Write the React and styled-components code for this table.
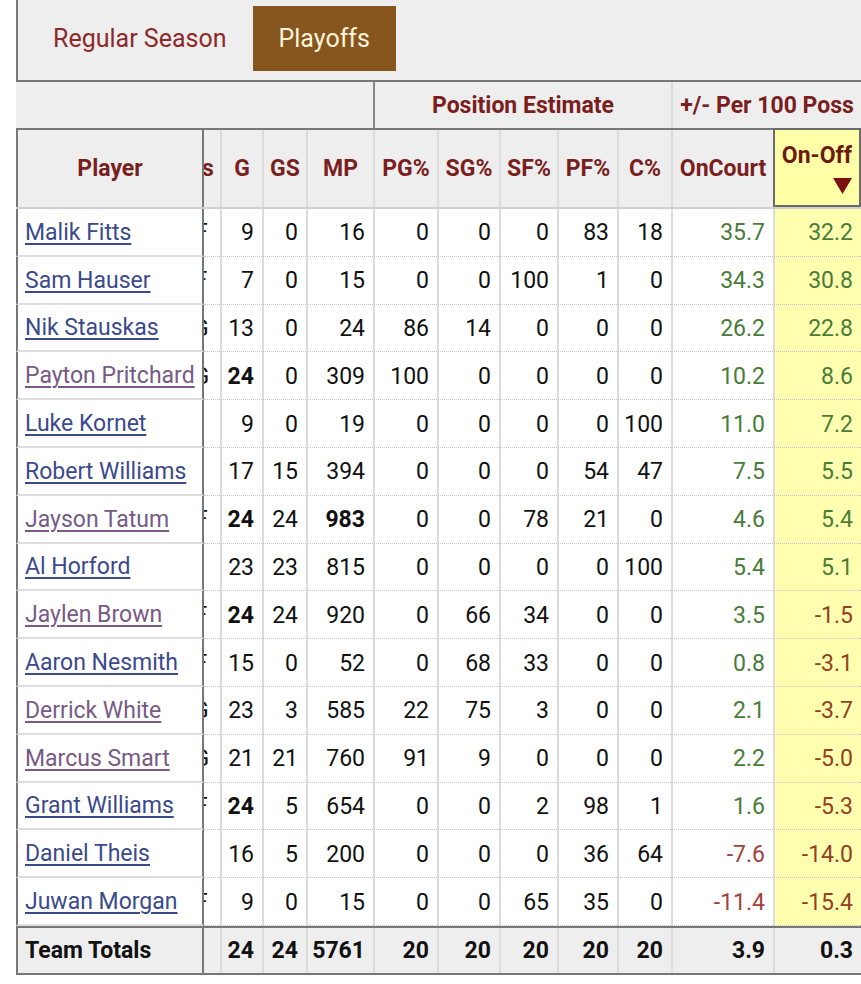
import React from 'react';
import styled, { createGlobalStyle } from 'styled-components';

const GlobalStyle = createGlobalStyle`
  html, body { margin: 0; padding: 0; background: #fff; }
  body { font-family: Roboto, "Noto Sans", "Liberation Sans", sans-serif; }
  * { box-sizing: border-box; }
`;

const COLS = '188px 16px 42px 44px 67px 64px 62px 58px 60px 54px 102px 88px';

const Page = styled.div`
  padding-left: 16px;
  width: 861px;
`;

const TabBar = styled.div`
  display: flex;
  align-items: flex-start;
  height: 82px;
  padding: 6px 0 0 9px;
  background: #eee;
  border-left: 2px solid #777;
  border-bottom: 2px solid #777;
`;

const Tab = styled.div`
  height: 65px;
  padding: 0 26px;
  display: flex;
  align-items: center;
  font-size: 25px;
  color: ${(p) => (p.$active ? '#fff4dc' : '#8c2a2a')};
  background: ${(p) => (p.$active ? '#87561e' : 'transparent')};
`;

const GroupRow = styled.div`
  display: grid;
  grid-template-columns: 357px 298px 190px;
  height: 46px;
  background: #eee;
`;

const GroupCell = styled.div`
  display: flex;
  align-items: center;
  justify-content: center;
  font-size: 23px;
  font-weight: 700;
  color: #7a1e1e;
  border-left: ${(p) => (p.$edge ? `2px solid ${p.$edge}` : 'none')};
`;

const HeadRow = styled.div`
  display: grid;
  grid-template-columns: ${COLS};
  height: 81px;
  background: #eee;
  border-top: 2px solid #777;
  border-bottom: 2px solid #cfcfcf;
`;

const HeadCell = styled.div`
  display: flex;
  align-items: center;
  justify-content: center;
  font-size: 23px;
  font-weight: 700;
  color: #7a1e1e;
  border-left: 2px solid #dcdcdc;
  white-space: nowrap;
`;

const PlayerHead = styled(HeadCell)`
  border-left: 2px solid #777;
  border-right: 2px solid #777;
`;

const PosHead = styled.div`
  overflow: hidden;
  display: flex;
  align-items: center;
  font-size: 23px;
  font-weight: 700;
  color: #7a1e1e;
`;

const SortHead = styled.div`
  display: flex;
  flex-direction: column;
  align-items: flex-end;
  justify-content: center;
  gap: 9px;
  padding-right: 7px;
  margin-top: -2px;
  background: #ffffa8;
  border: 2px solid #6a6a6a;
  font-size: 23px;
  font-weight: 700;
  color: #6e1a10;
`;

const ClipInner = styled.div`
  width: 40px;
  margin-left: -30px;
  flex: none;
  text-align: center;
`;

const Row = styled.div`
  display: grid;
  grid-template-columns: ${COLS};
  height: ${(p) => (p.$total ? '49px' : '47.8px')};
  background: ${(p) => (p.$total ? '#eee' : '#fff')};
  border-top: ${(p) => (p.$total ? '2px solid #777' : 'none')};
  border-bottom: ${(p) => (p.$total ? '2px solid #777' : 'none')};
`;

const PlayerCell = styled.div`
  display: flex;
  align-items: center;
  padding-left: 7px;
  padding-top: 1px;
  font-size: 23px;
  white-space: nowrap;
  overflow: hidden;
  color: #111;
  font-weight: ${(p) => (p.$total ? 700 : 400)};
  border-left: 2px solid #777;
  border-right: 2px solid #777;
  border-bottom: ${(p) => (p.$total ? 'none' : '2px solid #dedede')};
`;

const PlayerLink = styled.a`
  color: ${(p) => (p.$visited ? '#775a85' : '#3b4a8c')};
  text-decoration: underline;
  text-underline-offset: 3px;
  text-decoration-thickness: 1.5px;
`;

const PosCell = styled.div`
  display: flex;
  align-items: center;
  padding-top: 1px;
  overflow: hidden;
  font-size: 23px;
  color: #111;
  border-bottom: ${(p) => (p.$total ? 'none' : '1px dotted #c4c4c4')};
`;

const NumCell = styled.div`
  display: flex;
  align-items: center;
  justify-content: flex-end;
  padding-right: 8px;
  padding-top: 1px;
  font-size: 23px;
  white-space: nowrap;
  font-weight: ${(p) => (p.$bold ? 700 : 400)};
  color: ${(p) => p.$color || '#111'};
  background: ${(p) => p.$bg || 'transparent'};
  border-left: 2px solid #dcdcdc;
  border-bottom: ${(p) => (p.$total ? 'none' : '1px dotted #c4c4c4')};
`;

const GREEN = '#4a7c39';
const RED = '#a3403a';
const RED_Y = '#94401f';
const YELLOW = '#ffffb0';

const rows = [
  ['Malik Fitts', 'PF', 9, 0, 16, 0, 0, 0, 83, 18, '35.7', '32.2', false, []],
  ['Sam Hauser', 'SF', 7, 0, 15, 0, 0, 100, 1, 0, '34.3', '30.8', false, []],
  ['Nik Stauskas', 'SG', 13, 0, 24, 86, 14, 0, 0, 0, '26.2', '22.8', false, []],
  ['Payton Pritchard', 'PG', 24, 0, 309, 100, 0, 0, 0, 0, '10.2', '8.6', true, [2]],
  ['Luke Kornet', 'C', 9, 0, 19, 0, 0, 0, 0, 100, '11.0', '7.2', false, []],
  ['Robert Williams', 'C', 17, 15, 394, 0, 0, 0, 54, 47, '7.5', '5.5', false, []],
  ['Jayson Tatum', 'PF', 24, 24, 983, 0, 0, 78, 21, 0, '4.6', '5.4', true, [2, 4]],
  ['Al Horford', 'C', 23, 23, 815, 0, 0, 0, 0, 100, '5.4', '5.1', false, []],
  ['Jaylen Brown', 'SF', 24, 24, 920, 0, 66, 34, 0, 0, '3.5', '-1.5', true, [2]],
  ['Aaron Nesmith', 'SF', 15, 0, 52, 0, 68, 33, 0, 0, '0.8', '-3.1', false, []],
  ['Derrick White', 'SG', 23, 3, 585, 22, 75, 3, 0, 0, '2.1', '-3.7', true, []],
  ['Marcus Smart', 'PG', 21, 21, 760, 91, 9, 0, 0, 0, '2.2', '-5.0', true, []],
  ['Grant Williams', 'PF', 24, 5, 654, 0, 0, 2, 98, 1, '1.6', '-5.3', false, [2]],
  ['Daniel Theis', 'C', 16, 5, 200, 0, 0, 0, 36, 64, '-7.6', '-14.0', false, []],
  ['Juwan Morgan', 'PF', 9, 0, 15, 0, 0, 65, 35, 0, '-11.4', '-15.4', false, []],
];

const heads = ['G', 'GS', 'MP', 'PG%', 'SG%', 'SF%', 'PF%', 'C%', 'OnCourt'];

function SortArrow() {
  return (
    <svg width="19" height="16" viewBox="0 0 19 16">
      <polygon points="0,0 19,0 9.5,16" fill="#7a1010" />
    </svg>
  );
}

export default function App() {
  return (
    <Page>
      <GlobalStyle />
      <TabBar>
        <Tab>Regular Season</Tab>
        <Tab $active>Playoffs</Tab>
      </TabBar>
      <GroupRow>
        <GroupCell />
        <GroupCell $edge="#888">Position Estimate</GroupCell>
        <GroupCell $edge="#dcdcdc">+/- Per 100 Poss</GroupCell>
      </GroupRow>
      <HeadRow>
        <PlayerHead>Player</PlayerHead>
        <PosHead>
          <ClipInner>Pos</ClipInner>
        </PosHead>
        {heads.map((h) => (
          <HeadCell key={h}>{h}</HeadCell>
        ))}
        <SortHead>
          <span>On-Off</span>
          <SortArrow />
        </SortHead>
      </HeadRow>
      {rows.map((r) => {
        const [name, pos, ...rest] = r;
        const nums = rest.slice(0, 8);
        const on = rest[8];
        const diff = rest[9];
        const visited = rest[10];
        const bold = rest[11];
        return (
          <Row key={name}>
            <PlayerCell>
              <PlayerLink href="#" $visited={visited}>
                {name}
              </PlayerLink>
            </PlayerCell>
            <PosCell>
              <ClipInner>{pos}</ClipInner>
            </PosCell>
            {nums.map((n, i) => (
              <NumCell key={i} $bold={bold.includes(i + 2)}>
                {n}
              </NumCell>
            ))}
            <NumCell $color={on.startsWith('-') ? RED : GREEN}>{on}</NumCell>
            <NumCell $bg={YELLOW} $color={diff.startsWith('-') ? RED_Y : GREEN}>
              {diff}
            </NumCell>
          </Row>
        );
      })}
      <Row $total>
        <PlayerCell $total>Team Totals</PlayerCell>
        <PosCell $total />
        {[24, 24, 5761, 20, 20, 20, 20, 20, '3.9', '0.3'].map((n, i) => (
          <NumCell key={i} $total $bold>
            {n}
          </NumCell>
        ))}
      </Row>
    </Page>
  );
}
